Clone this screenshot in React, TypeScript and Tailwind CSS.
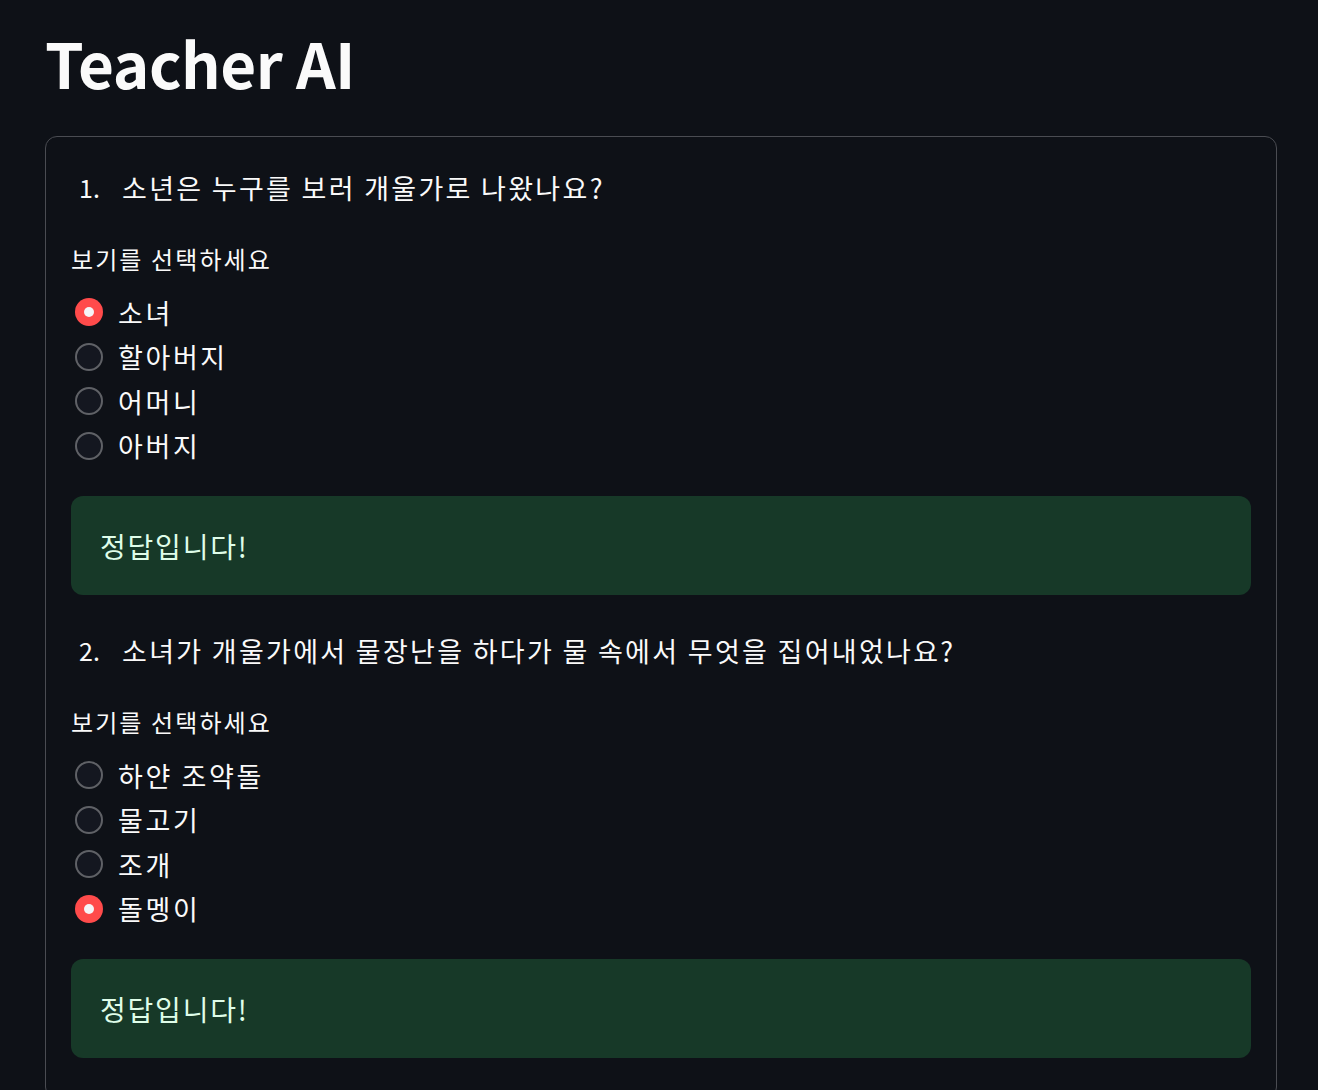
const font = { fontFamily: '"Noto Sans CJK KR", "Noto Sans", sans-serif' };

type Question = {
  no: number;
  text: string;
  options: string[];
  picked: number;
};

const questions: Question[] = [
  { no: 1, text: "소년은 누구를 보러 개울가로 나왔나요?", options: ["소녀", "할아버지", "어머니", "아버지"], picked: 0 },
  {
    no: 2,
    text: "소녀가 개울가에서 물장난을 하다가 물 속에서 무엇을 집어내었나요?",
    options: ["하얀 조약돌", "물고기", "조개", "돌멩이"],
    picked: 3,
  },
];

function Radio({ label, checked }: { label: string; checked: boolean }) {
  return (
    <div className="flex items-center h-[44.5px] pl-[4px]">
      {checked ? (
        <span className="w-[28px] h-[28px] rounded-full bg-[#ff4b4b] flex items-center justify-center">
          <span className="w-[10px] h-[10px] rounded-full bg-[#f5f5f7]" />
        </span>
      ) : (
        <span className="w-[28px] h-[28px] rounded-full border-2 border-[#5f6166] bg-[#141720]" />
      )}
      <span className="ml-[15px] text-[27px] leading-none tracking-[2.6px] text-[#fafafa]">{label}</span>
    </div>
  );
}

function QuestionBlock({ q, first }: { q: Question; first: boolean }) {
  return (
    <div className={first ? "" : "mt-[38px]"}>
      <div className="flex items-center h-[36px] text-[27px] text-[#fafafa]">
        <span className="w-[51px] pl-[8px] text-[25px]">{q.no}.</span>
        <span className="tracking-[2.3px]">{q.text}</span>
      </div>
      <div className="mt-[38px] h-[30px] flex items-center text-[24px] tracking-[2.1px] text-[#fafafa]">
        보기를 선택하세요
      </div>
      <div className="mt-[16px] flex flex-col">
        {q.options.map((o, i) => (
          <Radio key={o} label={o} checked={i === q.picked} />
        ))}
      </div>
      <div className="mt-[28px] h-[99px] rounded-[12px] bg-[#173928] flex items-center pl-[29px] text-[28px] tracking-[1.8px] text-[#dffde9]">
        정답입니다!
      </div>
    </div>
  );
}

export default function App() {
  return (
    <div className="min-h-screen bg-[#0e1117] px-[45px] pt-[20px] overflow-hidden" style={font}>
      <h1 className="text-[62px] font-bold leading-[84px] text-[#fafafa] tracking-[-0.5px]">Teacher AI</h1>
      <div className="mt-[32px] border border-[#4a4c52] rounded-[12px] px-[25px] pt-[33px] pb-[40px] w-[1232px]">
        {questions.map((q, i) => (
          <QuestionBlock key={q.no} q={q} first={i === 0} />
        ))}
      </div>
    </div>
  );
}
